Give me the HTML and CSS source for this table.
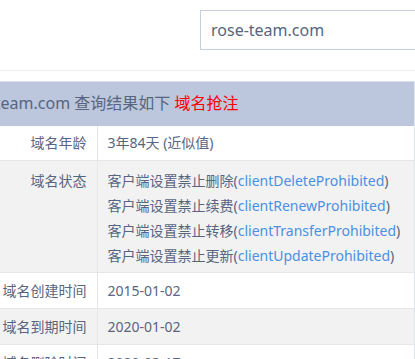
FILE: index.html
```html
<!DOCTYPE html>
<html lang="zh-CN">
  <head>
    <meta charset="UTF-8" />
    <meta name="viewport" content="width=device-width, initial-scale=1.0" />
    <title>域名查询结果</title>
    <link rel="stylesheet" href="styles.css">
  </head>
  <body>
    <div class="search-bar">
      <input type="text" class="search-input" value="rose-team.com" />
    </div>

    <div class="result-box">
      <div class="result-title">
        rose-team.com 查询结果如下 <span class="tag-red">域名抢注</span>
      </div>

      <table class="info-table">
        <tbody>
          <tr>
            <td class="label">域名年龄</td>
            <td class="value">3年84天 (近似值)</td>
          </tr>
          <tr class="row-grey status-row">
            <td class="label">域名状态</td>
            <td class="value">
              <div>客户端设置禁止删除(<a href="#">clientDeleteProhibited</a>)</div>
              <div>客户端设置禁止续费(<a href="#">clientRenewProhibited</a>)</div>
              <div>客户端设置禁止转移(<a href="#">clientTransferProhibited</a>)</div>
              <div>客户端设置禁止更新(<a href="#">clientUpdateProhibited</a>)</div>
            </td>
          </tr>
          <tr>
            <td class="label">域名创建时间</td>
            <td class="value">2015-01-02</td>
          </tr>
          <tr class="row-grey">
            <td class="label">域名到期时间</td>
            <td class="value">2020-01-02</td>
          </tr>
          <tr>
            <td class="label">域名删除时间</td>
            <td class="value">2020-03-17</td>
          </tr>
        </tbody>
      </table>
    </div>
  </body>
</html>
```

FILE: styles.css
```css
/* 基本样式 */
* {
  margin: 0;
  padding: 0;
  box-sizing: border-box;
}

html,
body {
  overflow: hidden;
}

body {
  font-family: "Noto Sans", "Noto Sans CJK SC", sans-serif;
  color: #576580;
  background-color: #fff;
  font-size: 14px;
}

/* 搜索框 */
.search-bar {
  height: 71px;
  padding: 10px 0 0 200px;
  border-bottom: 1px solid #eeeeee;
  white-space: nowrap;
}

.search-input {
  width: 260px;
  height: 40px;
  padding: 0 10px;
  border: 1px solid #c6cee0;
  font-family: inherit;
  font-size: 16px;
  color: #576580;
  outline: none;
}

/* 结果区域 */
.result-box {
  margin: 10px 0 0 -60px;
  width: 475px;
  border-right: 1px solid #e2e5ec;
}

.result-title {
  height: 45px;
  line-height: 43px;
  padding-left: 17px;
  font-size: 16px;
  background-color: #bcc6dc;
  border-top: 1px solid #dde1ea;
  white-space: nowrap;
}

.tag-red {
  color: #ff0000;
}

/* 数据表格 */
.info-table {
  width: 100%;
  border-collapse: collapse;
}

.info-table td {
  padding: 6px 10px;
  line-height: 23px;
  border-bottom: 1px solid #e6e6e6;
  vertical-align: top;
  white-space: nowrap;
}

.info-table tr:first-child td {
  padding-top: 5px;
  line-height: 23px;
}

.info-table .label {
  width: 157px;
  text-align: right;
  border-right: 1px solid #e6e6e6;
}

.row-grey {
  background-color: #f2f2f2;
}

.status-row td {
  padding-top: 7px;
  padding-bottom: 4px;
  line-height: 25px;
}

.info-table a {
  color: #4a90e2;
  text-decoration: none;
}
```
